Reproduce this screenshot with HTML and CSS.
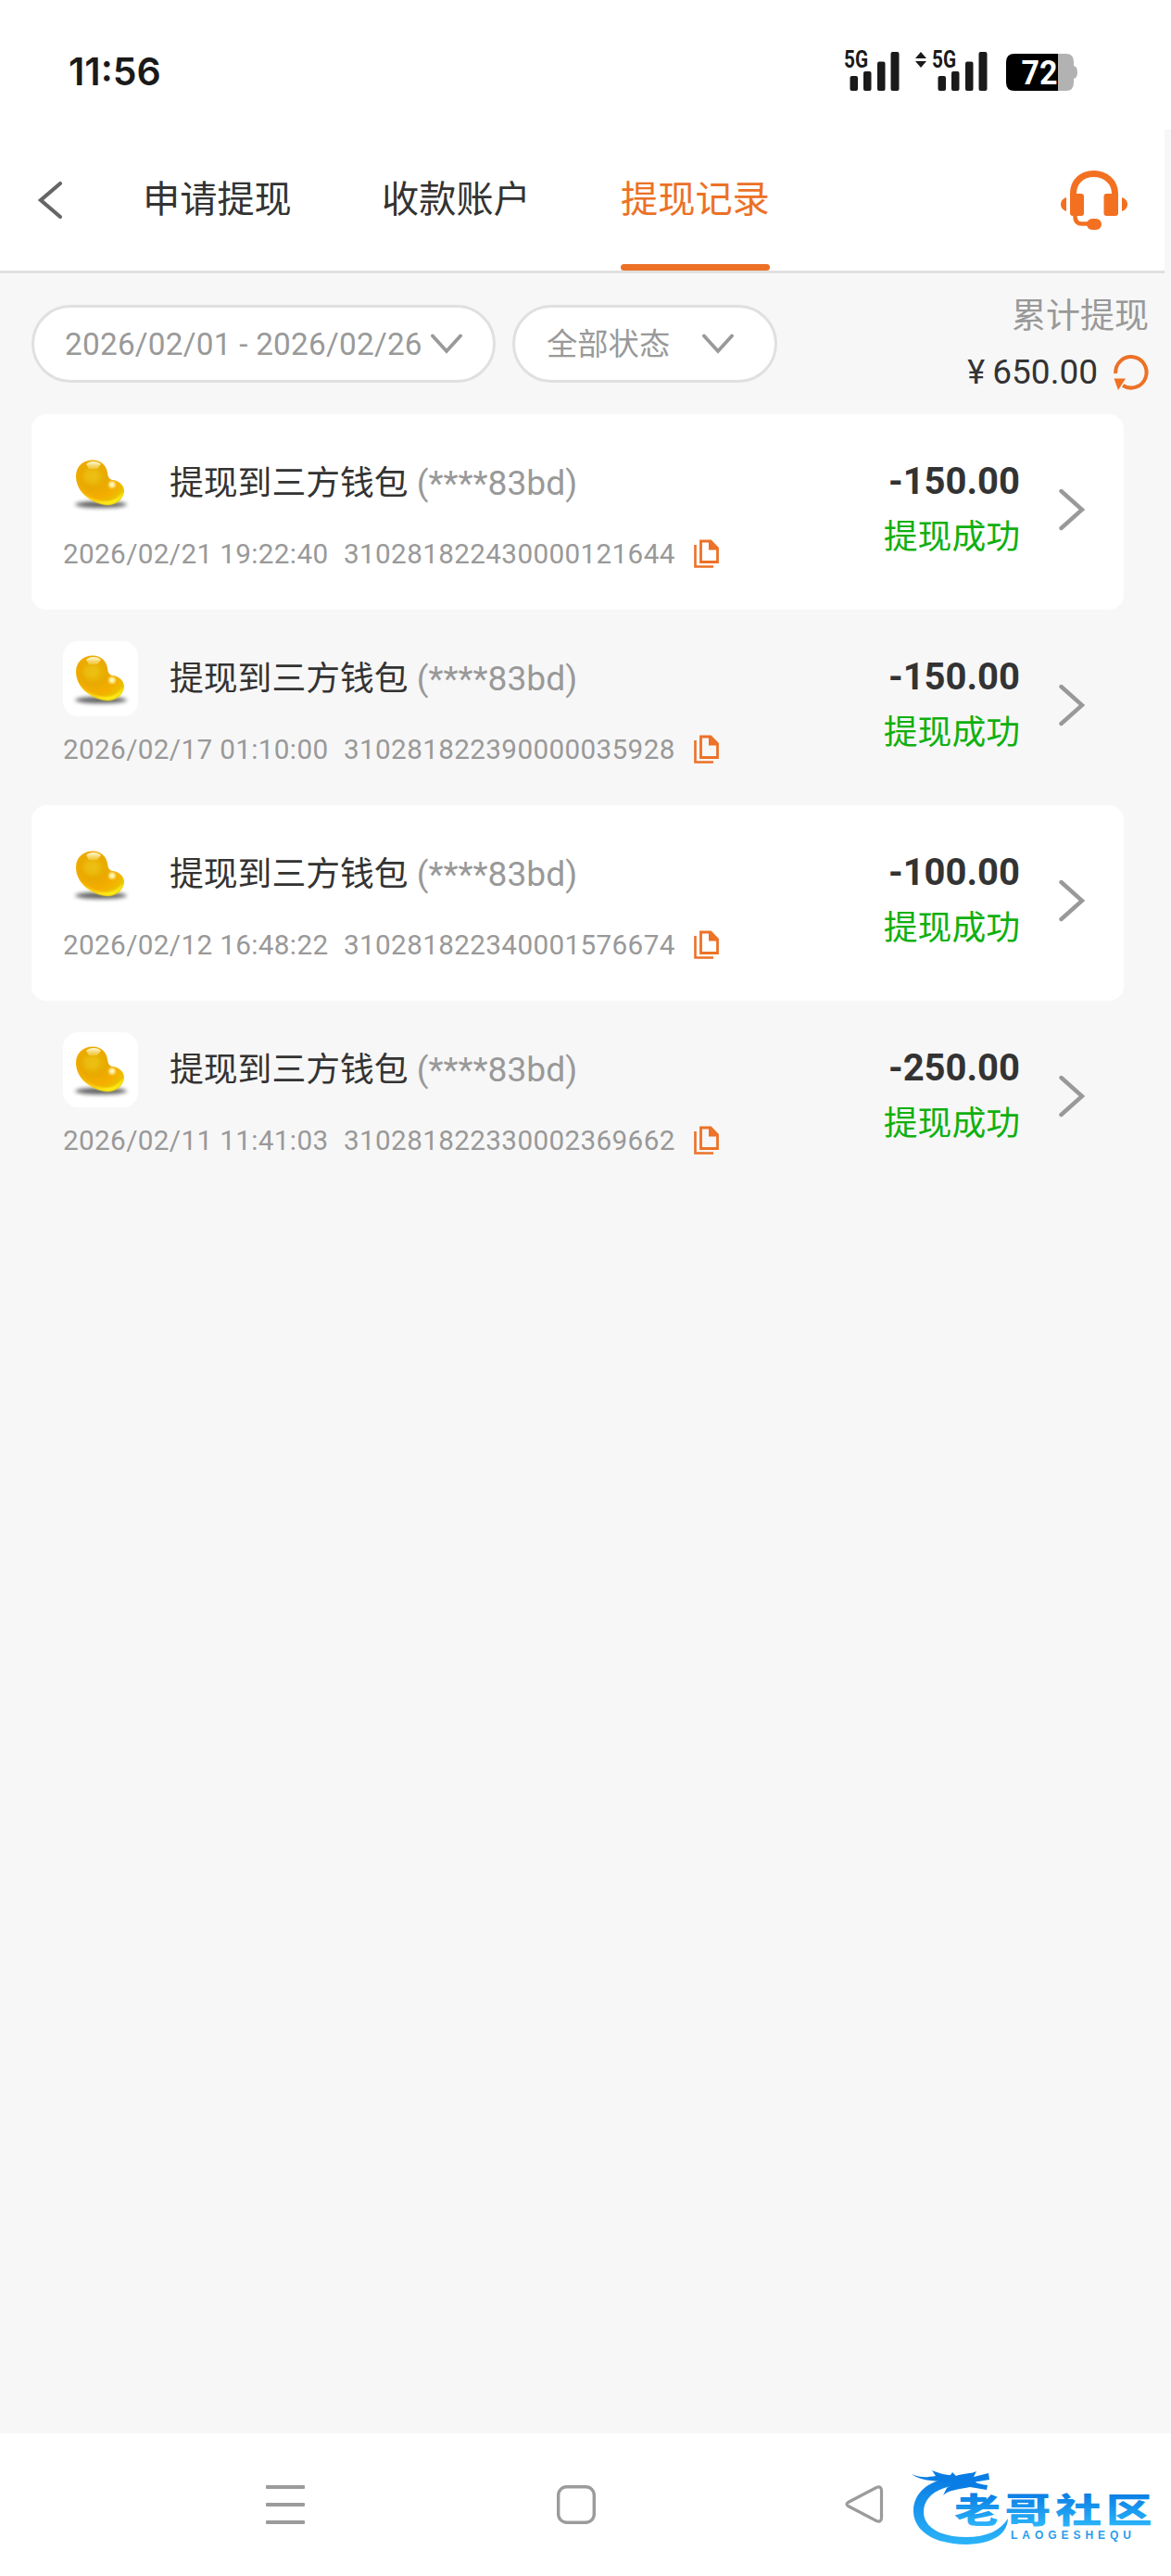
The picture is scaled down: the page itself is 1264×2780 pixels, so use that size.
FILE: index.html
```html
<!DOCTYPE html>
<html lang="zh-CN">
  <head>
    <meta charset="utf-8">
    <link rel="stylesheet" href="styles.css">
    <title>提现记录</title>
  </head>
  <body>
    <!-- shared symbols -->
    <svg class="defs" width="0" height="0">
      <defs>
        <radialGradient id="gold" cx="0.38" cy="0.36" r="0.7">
          <stop offset="0" stop-color="#e6b800"/>
          <stop offset="0.4" stop-color="#eaa900"/>
          <stop offset="0.7" stop-color="#f5ae00"/>
          <stop offset="1" stop-color="#e8c400"/>
        </radialGradient>
        <linearGradient id="shine" x1="0" y1="0" x2="0" y2="1">
          <stop offset="0" stop-color="#fffbe0"/>
          <stop offset="1" stop-color="#fff3a0" stop-opacity="0.3"/>
        </linearGradient>
        <linearGradient id="blue" x1="0" y1="0" x2="0" y2="1">
          <stop offset="0" stop-color="#0a7de4"/>
          <stop offset="1" stop-color="#2bb4f8"/>
        </linearGradient>
        <linearGradient id="blueText" gradientUnits="userSpaceOnUse" x1="0" y1="-34" x2="0" y2="3">
          <stop offset="0" stop-color="#0a7de4"/>
          <stop offset="1" stop-color="#2bb4f8"/>
        </linearGradient>
        <filter id="soft" x="-20%" y="-100%" width="140%" height="300%"><feGaussianBlur stdDeviation="2"/></filter>
        <filter id="soft1" x="-30%" y="-30%" width="160%" height="160%"><feGaussianBlur stdDeviation="1"/></filter>
      </defs>
      <symbol id="bean" viewBox="0 0 81 81">
        <ellipse cx="41" cy="63.500" rx="28" ry="3.500" fill="#444" opacity="0.85" filter="url(#soft)"/>
        <path d="M14 33C14 22 22 15.500 32 15.500C42 15.500 47 22 48 29C48.500 34 50 36.500 54 37C61 38 66 43 66 49C65 58 57 64 48 64C34 63 14 52 14 33Z" fill="url(#gold)"/>
        <path d="M18 46C26 57 38 61 48 60C56 59 62 55 65 49C65 57 57 63.500 48 63.500C36 63 23 55 18 46Z" fill="#fff01c" filter="url(#soft1)"/>
        <ellipse cx="31" cy="33" rx="9" ry="8" fill="#f0c820" opacity="0.5" filter="url(#soft)"/>
        <path d="M25 20C28 16 38 16 41 20L37 25H28Z" fill="url(#shine)"/>
        <circle cx="53" cy="42" r="3.500" fill="#fff6b0" filter="url(#soft1)"/>
      </symbol>
      <symbol id="copy" viewBox="0 0 27 31">
        <path d="M7.500 2H18L25.500 9.500V24.500H7.500Z" fill="none" stroke="#ec7127" stroke-width="2.800"/>
        <path d="M16 1.500V11.500H26Z" fill="#ec7127"/>
        <path d="M1.500 6V29.500H21" fill="none" stroke="#ec7127" stroke-width="2.600"/>
      </symbol>
      <symbol id="down" viewBox="0 0 34 22">
        <path d="M2 2.500L17 19L32 2.500" fill="none" stroke="#999" stroke-width="3.800" stroke-linecap="round"/>
      </symbol>
      <symbol id="right" viewBox="0 0 28 46">
        <path d="M2.500 3L25 23L2.500 43" fill="none" stroke="#999" stroke-width="4.400" stroke-linecap="round"/>
      </symbol>
    </svg>

    <div class="status-bar">
      <span class="time">11:56</span>
      <div class="signals">
        <svg class="signal" width="60" height="44" viewBox="0 0 60 44" fill="#1a1a1a">
          <text class="net" x="0" y="18" textLength="26" lengthAdjust="spacingAndGlyphs">5G</text>
          <rect x="6.500" y="27" width="8.500" height="16" rx="2"/>
          <rect x="21" y="22" width="8.500" height="21" rx="2"/>
          <rect x="36" y="11.500" width="8.500" height="31.500" rx="2"/>
          <rect x="50.500" y="1" width="9" height="42" rx="2"/>
        </svg>
        <svg class="updown" width="12" height="18" viewBox="0 0 12 18" fill="#1a1a1a">
          <path d="M6 0L12 7H0ZM6 17L0 10H12Z"/>
        </svg>
        <svg class="signal" width="60" height="44" viewBox="0 0 60 44" fill="#1a1a1a">
          <text class="net" x="0" y="18" textLength="26" lengthAdjust="spacingAndGlyphs">5G</text>
          <rect x="6.500" y="27" width="8.500" height="16" rx="2"/>
          <rect x="21" y="22" width="8.500" height="21" rx="2"/>
          <rect x="36" y="11.500" width="8.500" height="31.500" rx="2"/>
          <rect x="50.500" y="1" width="9" height="42" rx="2"/>
        </svg>
        <svg class="battery" width="77" height="40" viewBox="0 0 77 40">
          <path d="M56 0H65Q73 0 73 9V13Q77 14 77 20Q77 26 73 27V31Q73 40 65 40H56Z" fill="#b2b2b2"/>
          <path d="M56 0H9Q0 0 0 9V31Q0 40 9 40H56Z" fill="#000"/>
          <text class="level" x="16.500" y="33" fill="#fff" textLength="39" lengthAdjust="spacingAndGlyphs">72</text>
        </svg>
      </div>
    </div>

    <div class="header">
      <svg class="back" width="27" height="42" viewBox="0 0 27 42">
        <path d="M24 3L3 21L24 39" fill="none" stroke="#666" stroke-width="4.200" stroke-linecap="round"/>
      </svg>
      <div class="tabs">
        <div class="tab">申请提现</div>
        <div class="tab">收款账户</div>
        <div class="tab active">提现记录</div>
      </div>
      <svg class="service" width="72" height="64" viewBox="0 0 72 64" fill="#f37021">
        <path d="M13.500 28V25C13.500 12 23 3.500 35.500 3.500S58.500 12 58.500 25V28" fill="none" stroke="#f37021" stroke-width="7"/>
        <rect x="10" y="25" width="15" height="24" rx="3"/>
        <rect x="46.500" y="25" width="15.500" height="24" rx="3"/>
        <path d="M6 29V44C-2 42 -2 31 6 29ZM66 29V44C74 42 74 31 66 29Z"/>
        <path d="M15.500 47V50Q15.500 57.500 23 57.500H32" fill="none" stroke="#f37021" stroke-width="4.500"/>
        <rect x="28" y="52" width="16" height="12" rx="6"/>
      </svg>
    </div>

    <div class="filter">
      <div class="pill date"><span>2026/02/01 - 2026/02/26</span><svg width="34" height="22"><use href="#down"/></svg></div>
      <div class="pill state"><span>全部状态</span><svg width="34" height="22"><use href="#down"/></svg></div>
      <div class="total">
        <div class="total-label">累计提现</div>
        <div class="total-value">
          <span class="sum"><span class="yen">¥</span>650.00</span>
          <svg width="38" height="38" viewBox="0 0 38 38">
            <path d="M2.200 20A16.700 16.700 0 1 1 10 33" fill="none" stroke="#ec7127" stroke-width="4"/>
            <path d="M0.500 25.500H13L5 38Z" fill="#f37021"/>
          </svg>
        </div>
      </div>
    </div>

    <div class="list">
      <div class="item">
        <div class="info">
          <div class="title"><svg class="bean" width="81" height="81"><use href="#bean"/></svg><span>提现到三方钱包 <em>(****83bd)</em></span></div>
          <div class="detail"><span class="date-time">2026/02/21 19:22:40</span><span class="order">310281822430000121644</span><svg width="27" height="31"><use href="#copy"/></svg></div>
        </div>
        <div class="result"><div class="amount">-150.00</div><div class="success">提现成功</div></div>
        <svg class="more" width="28" height="46"><use href="#right"/></svg>
      </div>
      <div class="item">
        <div class="info">
          <div class="title"><svg class="bean" width="81" height="81"><use href="#bean"/></svg><span>提现到三方钱包 <em>(****83bd)</em></span></div>
          <div class="detail"><span class="date-time">2026/02/17 01:10:00</span><span class="order">310281822390000035928</span><svg width="27" height="31"><use href="#copy"/></svg></div>
        </div>
        <div class="result"><div class="amount">-150.00</div><div class="success">提现成功</div></div>
        <svg class="more" width="28" height="46"><use href="#right"/></svg>
      </div>
      <div class="item">
        <div class="info">
          <div class="title"><svg class="bean" width="81" height="81"><use href="#bean"/></svg><span>提现到三方钱包 <em>(****83bd)</em></span></div>
          <div class="detail"><span class="date-time">2026/02/12 16:48:22</span><span class="order">310281822340001576674</span><svg width="27" height="31"><use href="#copy"/></svg></div>
        </div>
        <div class="result"><div class="amount">-100.00</div><div class="success">提现成功</div></div>
        <svg class="more" width="28" height="46"><use href="#right"/></svg>
      </div>
      <div class="item">
        <div class="info">
          <div class="title"><svg class="bean" width="81" height="81"><use href="#bean"/></svg><span>提现到三方钱包 <em>(****83bd)</em></span></div>
          <div class="detail"><span class="date-time">2026/02/11 11:41:03</span><span class="order">310281822330002369662</span><svg width="27" height="31"><use href="#copy"/></svg></div>
        </div>
        <div class="result"><div class="amount">-250.00</div><div class="success">提现成功</div></div>
        <svg class="more" width="28" height="46"><use href="#right"/></svg>
      </div>
    </div>

    <div class="nav-bar">
      <svg class="menu" width="42" height="42" viewBox="0 0 42 42" fill="#9b9b9b">
        <rect width="42" height="4" rx="1"/>
        <rect y="19" width="42" height="4" rx="1"/>
        <rect y="38" width="42" height="4" rx="1"/>
      </svg>
      <svg class="home" width="42" height="42" viewBox="0 0 42 42">
        <rect x="1.700" y="1.700" width="38.600" height="38.600" rx="9" fill="none" stroke="#9b9b9b" stroke-width="3.400"/>
      </svg>
      <svg class="return" width="42" height="42" viewBox="0 0 42 42">
        <path d="M3.500 18.500L34 2.500Q39.500 0.500 39.500 6V35Q39.500 40.500 34 38.500L3.500 22.500Q0.500 20.500 3.500 18.500Z" fill="none" stroke="#9b9b9b" stroke-width="3.200"/>
      </svg>
      <svg class="logo" width="264" height="92" viewBox="0 0 264 92">
        <path d="M42 15C18 17 4 31 3 48C2 72 27 86 60 86C86 85 104 77 105 58C97 71 82 78 60 78C33 78 14 68 14 51C14 35 28 24 52 22Z" fill="url(#blue)"/>
        <path d="M1 10C12 15 19 13 27 12L23 6C30 9 37 11 43 11L45 8L49 12C56 9 65 10 71 7L68 13L84 9L85 16L73 18C65 18 76 22 83 22L82 27L64 24C50 27 41 27 35 33L39 25L47 20C34 16 15 20 1 10Z" fill="#0a7de4"/>
        <!-- glyphs are wider than tall in the logo -->
        <g transform="translate(47 63) scale(1.280 0.950)"><text class="brand" fill="url(#blueText)" textLength="167" lengthAdjust="spacing">老哥社区</text></g>
        <text class="brand-sub" x="108" y="80" fill="#2a9cec" textLength="130" lengthAdjust="spacing">LAOGESHEQU</text>
      </svg>
    </div>
  </body>
</html>
```

FILE: styles.css
```css
* {
  box-sizing: border-box;
}
body {
  margin: 0;
  width: 1264px;
  height: 2780px;
  display: flex;
  flex-direction: column;
  background: #f7f7f7;
  color: #333;
  font-family: Roboto, "Noto Sans CJK SC", sans-serif;
}
svg {
  display: block;
  flex: none;
  overflow: visible;
}
.status-bar {
  height: 140px;
  padding: 14px 101px 0 74px;
  display: flex;
  align-items: center;
  justify-content: space-between;
  background: #fff;
}
.time {
  font: 600 41px/50px Inter, sans-serif;
  color: #1a1a1a;
}
.signals {
  display: flex;
  align-items: flex-start;
}
.updown {
  margin: 1px 6px 0 17px;
}
.battery {
  margin: 3px 0 0 20px;
}
.net {
  font: bold 25.500px Roboto, sans-serif;
}
.level {
  font: bold 36px Roboto, sans-serif;
}

.header {
  width: 1257px;
  height: 155px;
  padding: 0 40px 0 41px;
  display: flex;
  align-items: center;
  background: #fff;
  border-bottom: 3px solid #e0e0e0;
}
.tabs {
  height: 152px;
  margin-left: 86px;
  display: flex;
  gap: 97px;
}
.tab {
  width: 161px;
  padding-top: 6px;
  font-size: 40.200px;
  line-height: 139px;
  white-space: nowrap;
}
.tab.active {
  color: #ec7127;
}
.tab.active::after {
  content: "";
  display: block;
  height: 7px;
  background: #ec7127;
  border-radius: 4px;
}
.service {
  margin-left: auto;
}

.filter {
  height: 152px;
  padding: 0 24px 0 34px;
  display: flex;
  color: #999;
}
.pill {
  height: 84px;
  margin-top: 34px;
  display: flex;
  align-items: center;
  background: #fff;
  border: 3px solid #e0e0e0;
  border-radius: 42px;
  font-size: 33.300px;
  white-space: nowrap;
}
.date {
  width: 501px;
  padding: 0 33px 0 33px;
  justify-content: space-between;
  letter-spacing: 0.250px;
}
.state {
  width: 286px;
  margin-left: 18px;
  padding: 0 44px 0 34px;
  justify-content: space-between;
}
.state span {
  padding-bottom: 5px;
}
.total {
  margin-left: auto;
  padding-top: 22px;
  font-size: 37px;
  text-align: right;
}
.total-label {
  line-height: 50px;
}
.total-value {
  display: flex;
  align-items: center;
  justify-content: flex-end;
  gap: 17px;
  margin-top: 13px;
  line-height: 44px;
  color: #333;
}
.yen {
  margin-right: 8px;
  font-size: 36px;
}

.list {
  width: 1213px;
  padding-left: 34px;
}
.item {
  height: 211px;
  padding: 34px 42px 0 34px;
  display: flex;
  border-radius: 16px;
}
.item:nth-child(odd) {
  background: #fff;
}
.title {
  display: flex;
  align-items: center;
  height: 81px;
  font-size: 36.800px;
  white-space: nowrap;
}
.title span {
  padding-bottom: 8px;
}
.title em {
  font-style: normal;
  font-size: 37.200px;
  color: #999;
}
.bean {
  margin-right: 34px;
  background: #fff;
  border-radius: 16px;
}
.detail {
  display: flex;
  align-items: center;
  margin-top: 18px;
  height: 34px;
  font-size: 29.700px;
  letter-spacing: 0.350px;
  color: #999;
}
.date-time {
  width: 303px;
}
.order {
  width: 378px;
}
.result {
  margin-left: auto;
  text-align: right;
}
.amount {
  margin-top: 15px;
  font-size: 40px;
  font-weight: bold;
  line-height: 48px;
}
.success {
  margin-top: 12px;
  font-size: 36.800px;
  line-height: 48px;
  color: #10b010;
}
.more {
  margin: 46px 0 0 42px;
}

.nav-bar {
  margin-top: auto;
  height: 154px;
  display: flex;
  align-items: flex-start;
  padding: 56px 0 0 287px;
  background: #fff;
}
.home {
  margin-left: 272px;
}
.return {
  margin-left: 269px;
}
.logo {
  margin: -22px 0 0 29px;
}
.brand {
  font: 900 39px "Noto Sans CJK SC", sans-serif;
}
.brand-sub {
  font: bold 12px "Liberation Sans", sans-serif;
}
```
